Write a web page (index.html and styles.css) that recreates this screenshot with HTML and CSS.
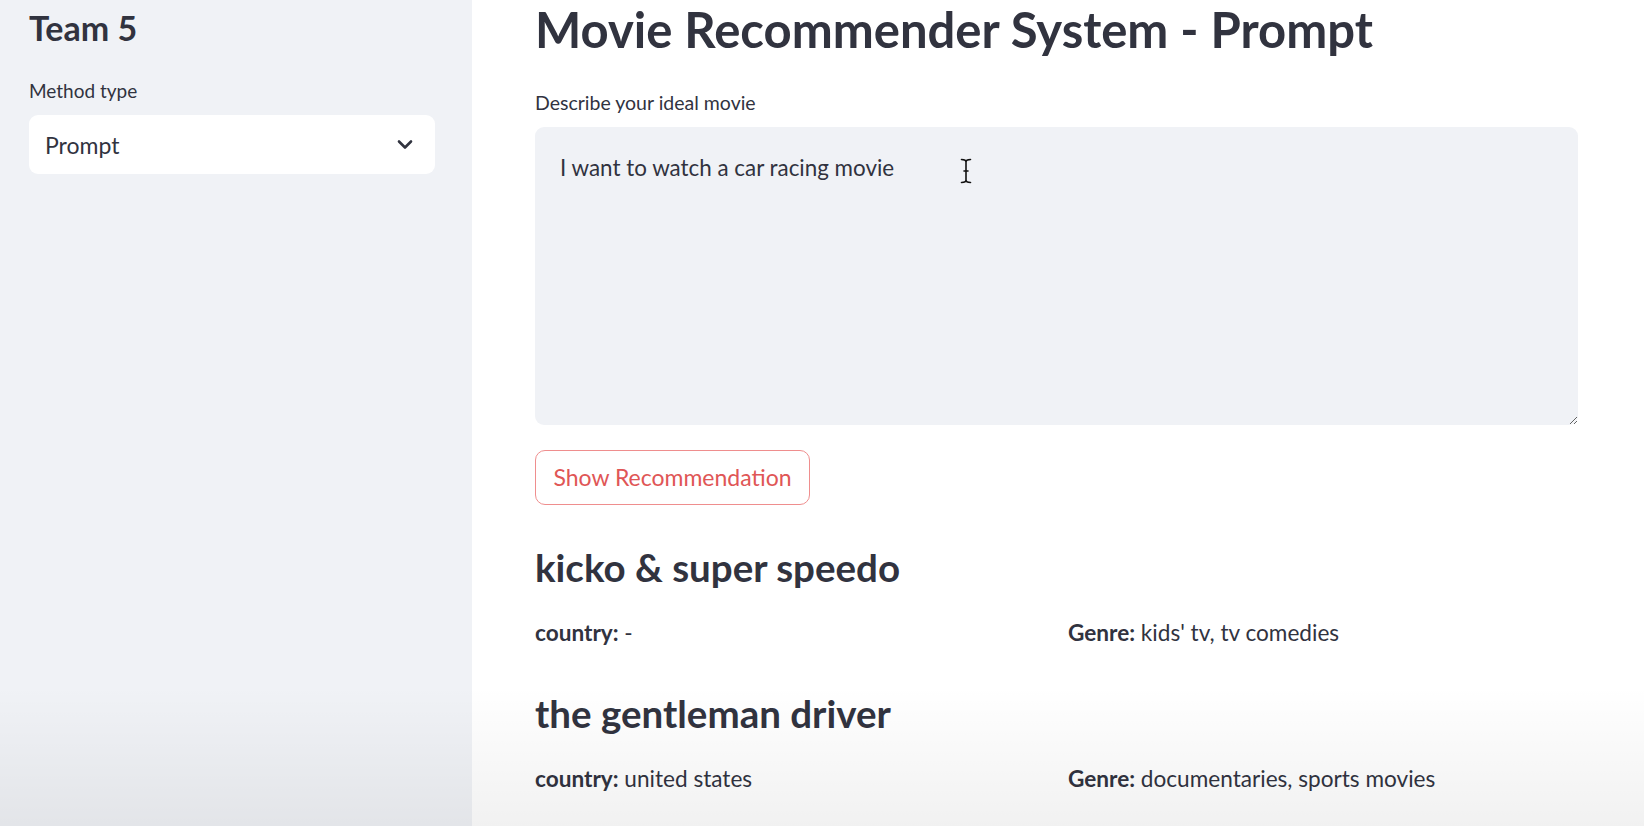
FILE: index.html
```html
<!DOCTYPE html>
<html lang="en">
<head>
<meta charset="utf-8">
<title>Movie Recommender System - Prompt</title>
<link rel="stylesheet" href="styles.css">
</head>
<body>
<div class="app">
  <aside class="sidebar">
    <h2 class="team">Team 5</h2>
    <div class="field-label">Method type</div>
    <div class="select">
      <span class="select-value">Prompt</span>
      <svg class="chevron" width="16" height="11" viewBox="0 0 16 11"><path d="M2 2.5 L8 8.5 L14 2.5" fill="none" stroke="#31333f" stroke-width="2.6" stroke-linecap="round" stroke-linejoin="round"/></svg>
    </div>
  </aside>
  <main class="main">
    <h1 class="title">Movie Recommender System - Prompt</h1>
    <div class="field-label main-label">Describe your ideal movie</div>
    <div class="textarea-wrap">
      <textarea class="textarea" readonly>I want to watch a car racing movie</textarea>
      <svg class="ibeam" width="12" height="26" viewBox="0 0 12 26"><path d="M1.5 1.5 Q6 1.5 6 4 Q6 1.5 10.5 1.5 M6 4 V22 M1.5 24.5 Q6 24.5 6 22 Q6 24.5 10.5 24.5 M4 13 H8" fill="none" stroke="#111" stroke-width="1.6" stroke-linecap="round"/></svg>
    </div>
    <button class="btn" type="button">Show Recommendation</button>
    <section class="movie">
      <h3 class="movie-title">kicko &amp; super speedo</h3>
      <div class="cols">
        <p class="meta"><b>country:</b> -</p>
        <p class="meta"><b>Genre:</b> kids' tv, tv comedies</p>
      </div>
    </section>
    <section class="movie">
      <h3 class="movie-title">the gentleman driver</h3>
      <div class="cols">
        <p class="meta"><b>country:</b> united states</p>
        <p class="meta"><b>Genre:</b> documentaries, sports movies</p>
      </div>
    </section>
  </main>
  <div class="shade"></div>
</div>
</body>
</html>
```

FILE: styles.css
```css
* { box-sizing: border-box; }
html, body {
  margin: 0;
  padding: 0;
  height: 100%;
  overflow: hidden;
}
body {
  font-family: Lato, "Noto Sans", sans-serif;
  color: #31333f;
  background: #ffffff;
}
.app {
  position: relative;
  display: flex;
  width: 1644px;
  height: 826px;
  overflow: hidden;
}
.sidebar {
  width: 472px;
  flex: 0 0 472px;
  background: #f0f2f6;
  padding: 6px 37px 0 29px;
}
.team {
  margin: 0;
  font-size: 34px;
  line-height: 44px;
  font-weight: 700;
  color: #31333f;
}
.field-label {
  font-size: 19px;
  line-height: 24px;
  color: #31333f;
  margin-top: 29px;
}
.select {
  margin-top: 12px;
  height: 59px;
  background: #ffffff;
  border-radius: 9px;
  display: flex;
  align-items: center;
  justify-content: space-between;
  padding: 0 22px 0 16px;
}
.select-value {
  font-size: 23px;
  color: #31333f;
}
.chevron { display: block; }
.main {
  flex: 1;
  padding: 0 66px 0 63px;
}
.title {
  margin: 0;
  font-size: 49px;
  line-height: 58px;
  font-weight: 700;
  color: #31333f;
}
.main-label {
  margin-top: 33px;
  font-size: 19.5px;
}
.textarea-wrap {
  position: relative;
  margin-top: 12px;
}
.textarea {
  display: block;
  width: 100%;
  height: 298px;
  background: #f0f2f6;
  border: none;
  border-radius: 9px;
  padding: 26px 25px 20px;
  font-family: Lato, "Noto Sans", sans-serif;
  font-size: 22.4px;
  line-height: 30px;
  color: #31333f;
  resize: vertical;
  outline: none;
}
.ibeam {
  position: absolute;
  left: 425px;
  top: 31px;
}
.btn {
  display: block;
  margin-top: 25px;
  height: 55px;
  width: 275px;
  background: #ffffff;
  border: 1.5px solid #ef8e8e;
  border-radius: 10px;
  color: #e05656;
  font-family: Lato, "Noto Sans", sans-serif;
  font-size: 23px;
  padding: 0 0 2px;
}
.movie-title {
  margin: 38px 0 0;
  font-size: 38.5px;
  line-height: 48px;
  font-weight: 700;
  color: #31333f;
}
.movie + .movie .movie-title {
  margin-top: 41px;
}
.cols {
  display: grid;
  grid-template-columns: 1fr 1fr;
  column-gap: 23px;
  margin-top: 27px;
}
.meta {
  margin: 0;
  font-size: 22.6px;
  line-height: 30px;
  color: #31333f;
}
.meta b { font-weight: 700; }
.shade {
  position: absolute;
  left: 0;
  right: 0;
  bottom: 0;
  height: 140px;
  background: linear-gradient(to bottom, rgba(0,0,0,0), rgba(0,0,0,0.055));
  pointer-events: none;
}
```
